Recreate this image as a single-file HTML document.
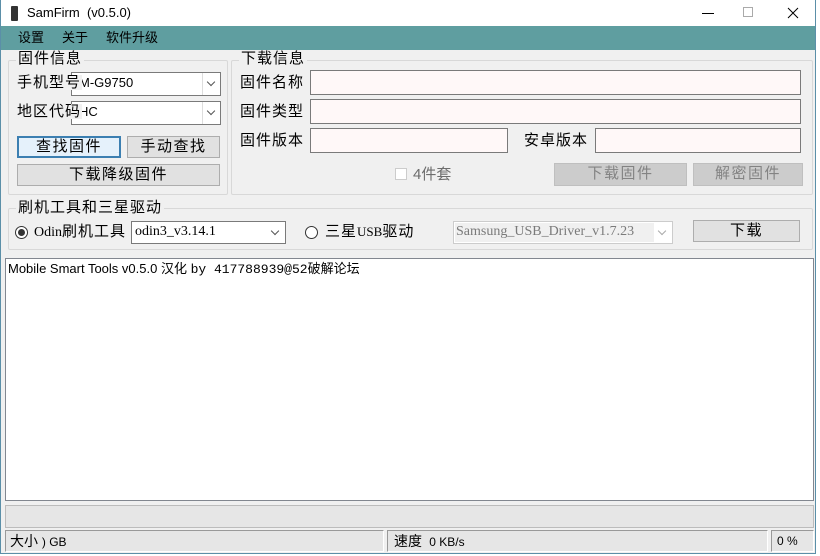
<!DOCTYPE html>
<html><head><meta charset="utf-8"><style>
*{margin:0;padding:0;box-sizing:border-box}
body{width:820px;height:556px;background:#fff;position:relative;overflow:hidden;font-family:"Liberation Sans","Noto Sans CJK SC",sans-serif;font-size:15px;color:#000}
.a{position:absolute}
.t{position:absolute;white-space:nowrap;line-height:1}
.ls{letter-spacing:1px}
.grp{position:absolute;border:1px solid #d8d8d8;border-radius:2px}
.gl{position:absolute;background:#f0f0f0;padding:0 2px;line-height:1;font-size:15px;white-space:nowrap;letter-spacing:1px}
.combo{position:absolute;background:#fff;border:1px solid #7a7a7a}
.combo .arr{position:absolute;right:0;top:0;bottom:0;width:18px;border-left:1px solid #ddd}
.combo .arr:after{content:"";position:absolute;left:5px;top:6px;width:5px;height:5px;border-right:1px solid #555;border-bottom:1px solid #555;transform:rotate(45deg)}
.tb{position:absolute;background:#fff8f8;border:1px solid #7a7a7a}
.btn{position:absolute;background:#e1e1e1;border:1px solid #adadad;text-align:center;font-size:15px;line-height:20px;letter-spacing:1.5px}
.dis{background:#cccccc;border-color:#bfbfbf;color:#838383}
.serif{font-family:"Liberation Serif","Noto Serif CJK SC",serif}
</style></head><body>
<div class="a" style="left:0;top:0;width:816px;height:554px;background:#f0f0f0;border:1px solid #5b8fa8;border-top:none"></div>
<div class="a" style="left:1px;top:0;width:814px;height:26px;background:#fff"></div>
<div class="a" style="left:11px;top:6px;width:7px;height:15px;background:#333;border-radius:1px"></div>
<div class="t" style="left:27px;top:6px;font-size:13px">SamFirm&nbsp;&nbsp;(v0.5.0)</div>
<div class="a" style="left:702px;top:13px;width:12px;height:1px;background:#000"></div>
<div class="a" style="left:743px;top:7px;width:10px;height:10px;border:1px solid #aaa"></div>
<svg class="a" style="left:787px;top:7px" width="12" height="12"><path d="M1 1L11 11M11 1L1 11" stroke="#000" stroke-width="1"/></svg>
<div class="a" style="left:1px;top:26px;width:814px;height:24px;background:#5f9ea0"></div>
<div class="t" style="left:18px;top:31px;font-size:13px">设置</div>
<div class="t" style="left:62px;top:31px;font-size:13px">关于</div>
<div class="t" style="left:106px;top:31px;font-size:13px">软件升级</div>

<div class="grp" style="left:8px;top:60px;width:220px;height:135px"></div>
<div class="gl" style="left:16px;top:51px">固件信息</div>
<div class="combo" style="left:71px;top:72px;width:150px;height:24px"><div class="arr"></div></div>
<div class="t" style="left:79px;top:76px;font-size:13px">M-G9750</div>
<div class="t ls" style="left:17px;top:75px;background:#f0f0f0;padding-right:1px">手机型号</div>
<div class="combo" style="left:71px;top:101px;width:150px;height:24px"><div class="arr"></div></div>
<div class="t" style="left:79px;top:105px;font-size:13px">HC</div>
<div class="t ls" style="left:17px;top:104px;background:#f0f0f0;padding-right:1px">地区代码</div>
<div class="btn" style="left:17px;top:136px;width:104px;height:22px;border:2px solid #3c7fb1;background:#e5f1fb;line-height:18px">查找固件</div>
<div class="btn" style="left:127px;top:136px;width:93px;height:22px">手动查找</div>
<div class="btn" style="left:17px;top:164px;width:203px;height:22px">下载降级固件</div>

<div class="grp" style="left:231px;top:60px;width:582px;height:135px"></div>
<div class="gl" style="left:239px;top:51px">下载信息</div>
<div class="t ls" style="left:240px;top:75px">固件名称</div>
<div class="tb" style="left:310px;top:70px;width:491px;height:25px"></div>
<div class="t ls" style="left:240px;top:104px">固件类型</div>
<div class="tb" style="left:310px;top:99px;width:491px;height:25px"></div>
<div class="t ls" style="left:240px;top:133px">固件版本</div>
<div class="tb" style="left:310px;top:128px;width:198px;height:25px"></div>
<div class="t ls" style="left:524px;top:133px">安卓版本</div>
<div class="tb" style="left:595px;top:128px;width:206px;height:25px"></div>
<div class="a" style="left:395px;top:168px;width:12px;height:12px;border:1px solid #ccc;background:#fff"></div>
<div class="t" style="left:413px;top:167px;color:#6d6d6d">4件套</div>
<div class="btn dis" style="left:554px;top:163px;width:133px;height:23px">下载固件</div>
<div class="btn dis" style="left:693px;top:163px;width:110px;height:23px">解密固件</div>

<div class="grp" style="left:8px;top:208px;width:805px;height:42px"></div>
<div class="gl" style="left:16px;top:200px">刷机工具和三星驱动</div>
<div class="a" style="left:15px;top:226px;width:13px;height:13px;border:1px solid #333;border-radius:50%;background:#fff"></div>
<div class="a" style="left:18px;top:229px;width:7px;height:7px;border-radius:50%;background:#333"></div>
<div class="t ls" style="left:34px;top:224px"><span class="serif" style="font-size:14px;letter-spacing:0">Odin</span>刷机工具</div>
<div class="combo" style="left:131px;top:221px;width:155px;height:23px"><div class="arr" style="border:none"></div></div>
<div class="t serif" style="left:135px;top:225px;font-size:14px">odin3_v3.14.1</div>
<div class="a" style="left:305px;top:226px;width:13px;height:13px;border:1px solid #333;border-radius:50%;background:#fff"></div>
<div class="t ls" style="left:325px;top:224px">三星<span class="serif" style="font-size:13px;letter-spacing:0">USB</span>驱动</div>
<div class="combo" style="left:453px;top:221px;width:220px;height:23px;border-color:#ccc"><div class="arr" style="border:none;opacity:.5"></div></div>
<div class="a" style="left:455px;top:223px;width:199px;height:19px;background:#f0f0f0"></div>
<div class="t serif" style="left:456px;top:225px;font-size:14px;color:#7a7a7a">Samsung_USB_Driver_v1.7.23</div>
<div class="btn" style="left:693px;top:220px;width:107px;height:22px">下载</div>

<div class="a" style="left:5px;top:258px;width:809px;height:243px;background:#fff;border:1px solid #828790"></div>
<div class="t" style="left:8px;top:262px;font-size:13px">Mobile Smart Tools v0.5.0 汉化 <span style="font-family:'Liberation Mono','Noto Sans CJK SC',monospace">by 417788939@52破解论坛</span></div>

<div class="a" style="left:5px;top:505px;width:809px;height:23px;background:#e6e6e6;border:1px solid #bcbcbc"></div>
<div class="a" style="left:5px;top:530px;width:379px;height:22px;background:#e6e6e6;border:1px solid #999;border-right-color:#fff;border-bottom-color:#fff"></div>
<div class="a" style="left:387px;top:530px;width:381px;height:22px;background:#e6e6e6;border:1px solid #999;border-right-color:#fff;border-bottom-color:#fff"></div>
<div class="a" style="left:771px;top:530px;width:43px;height:22px;background:#e6e6e6;border:1px solid #999;border-right-color:#fff;border-bottom-color:#fff"></div>
<div class="t" style="left:10px;top:534px;font-size:14px">大小 <span style="font-size:12px">) GB</span></div>
<div class="t" style="left:394px;top:534px;font-size:14px">速度 <span style="font-size:12px">&nbsp;0 KB/s</span></div>
<div class="t" style="left:777px;top:535px;font-size:12px">0 %</div>
</body></html>
